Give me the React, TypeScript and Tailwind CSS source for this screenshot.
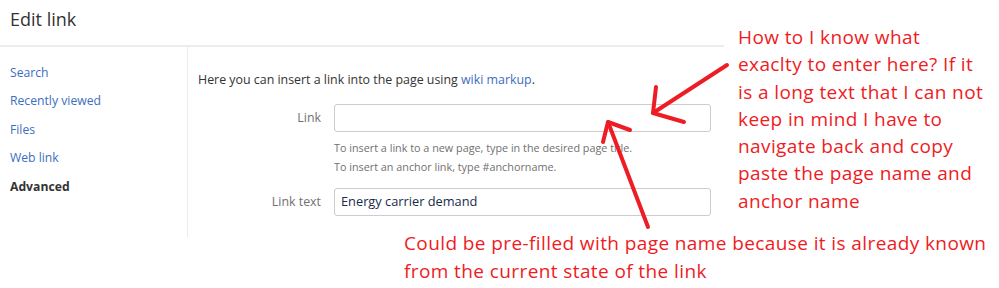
import React from "react";

const ui = { fontFamily: '"Open Sans", "Noto Sans", sans-serif' };
const note = { fontFamily: '"Open Sans", "Noto Sans", sans-serif' };

export default function App() {
  return (
    <div className="relative w-[999px] h-[288px] bg-white overflow-hidden" style={ui}>
      <div className="flex flex-col w-[724px]">
        <div className="h-[47px] border-b-2 border-[#ebecf0] pl-[10px] pt-[6px] text-[18px] text-[#333]">
          Edit link
        </div>
        <div className="flex h-[190px]">
          <div className="w-[188px] border-r border-[#ebecf0] pl-[10px] pt-[12px] flex flex-col text-[12.2px] leading-[28.4px] text-[#3b6ec0]">
            <span>Search</span>
            <span>Recently viewed</span>
            <span>Files</span>
            <span>Web link</span>
            <span className="font-bold text-[#333]">Advanced</span>
          </div>
          <div className="flex-1 pl-[10px] pt-[24px] text-[12.4px] text-[#333]">
            <div className="leading-[18px]">
              Here you can insert a link into the page using <span className="text-[#3b6ec0]">wiki markup</span>.
            </div>
            <div className="mt-[15px] flex items-center">
              <div className="w-[123px] text-right text-[#707070]">Link</div>
              <div className="ml-[13px] w-[377px] h-[28px] rounded-[3px] border border-[#cccccc] bg-white" />
            </div>
            <div className="ml-[136px] mt-[6px] text-[10.8px] leading-[19px] text-[#707070]">
              <div>To insert a link to a new page, type in the desired page title.</div>
              <div>To insert an anchor link, type #anchorname.</div>
            </div>
            <div className="mt-[12px] flex items-center">
              <div className="w-[123px] text-right text-[#707070]">Link text</div>
              <div className="ml-[13px] w-[377px] h-[28px] rounded-[3px] border border-[#cccccc] bg-white flex items-center pl-[6px] text-[12.8px] text-[#172b4d]">
                Energy carrier demand
              </div>
            </div>
          </div>
        </div>
      </div>

      <div className="absolute left-[738px] top-[24px] text-[19px] leading-[27.3px] tracking-[0.4px] text-[#ee1c24] whitespace-nowrap" style={note}>
        How to I know what<br />
        exaclty to enter here? If it<br />
        is a long text that I can not<br />
        keep in mind I have to<br />
        navigate back and copy<br />
        paste the page name and<br />
        anchor name
      </div>

      <div className="absolute left-[404px] top-[229px] text-[19px] leading-[28px] tracking-[0.4px] text-[#ee1c24] whitespace-nowrap" style={note}>
        Could be pre-filled with page name because it is already known<br />
        from the current state of the link
      </div>

      <svg className="absolute left-0 top-0 pointer-events-none" width="999" height="288" viewBox="0 0 999 288">
        <g stroke="#ee1c24" strokeWidth="4" strokeLinecap="round" strokeLinejoin="round" fill="none">
          <path d="M727 65 L653 113" />
          <path d="M656 87 L653 113 L684 122" />
          <path d="M648 227 L608 122" />
          <path d="M603 142 L608 122 L630 130" />
        </g>
      </svg>
    </div>
  );
}
